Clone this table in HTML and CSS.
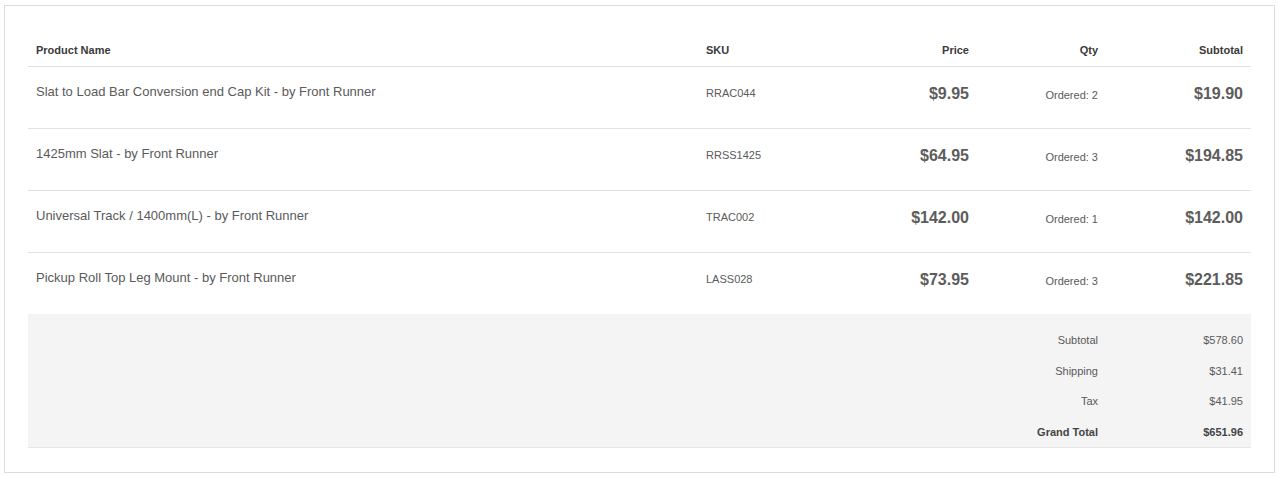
FILE: index.html
```html
<!DOCTYPE html>
<html lang="en">
<head>
<meta charset="utf-8">
<title>Order Items</title>
<link rel="stylesheet" href="styles.css">
</head>
<body>
<div class="order-box">
  <table class="items">
    <colgroup>
      <col class="c-name"><col class="c-sku"><col class="c-price"><col class="c-qty"><col class="c-sub">
    </colgroup>
    <thead>
      <tr>
        <th class="name">Product Name</th>
        <th class="sku">SKU</th>
        <th class="num">Price</th>
        <th class="num">Qty</th>
        <th class="num">Subtotal</th>
      </tr>
    </thead>
    <tbody>
      <tr>
        <td class="name">Slat to Load Bar Conversion end Cap Kit - by Front Runner</td>
        <td class="sku">RRAC044</td>
        <td class="price">$9.95</td>
        <td class="qty">Ordered: 2</td>
        <td class="price">$19.90</td>
      </tr>
      <tr>
        <td class="name">1425mm Slat - by Front Runner</td>
        <td class="sku">RRSS1425</td>
        <td class="price">$64.95</td>
        <td class="qty">Ordered: 3</td>
        <td class="price">$194.85</td>
      </tr>
      <tr>
        <td class="name">Universal Track / 1400mm(L) - by Front Runner</td>
        <td class="sku">TRAC002</td>
        <td class="price">$142.00</td>
        <td class="qty">Ordered: 1</td>
        <td class="price">$142.00</td>
      </tr>
      <tr>
        <td class="name">Pickup Roll Top Leg Mount - by Front Runner</td>
        <td class="sku">LASS028</td>
        <td class="price">$73.95</td>
        <td class="qty">Ordered: 3</td>
        <td class="price">$221.85</td>
      </tr>
    </tbody>
    <tfoot>
      <tr class="first">
        <th colspan="4" class="label">Subtotal</th>
        <td class="amount">$578.60</td>
      </tr>
      <tr>
        <th colspan="4" class="label">Shipping</th>
        <td class="amount">$31.41</td>
      </tr>
      <tr>
        <th colspan="4" class="label">Tax</th>
        <td class="amount">$41.95</td>
      </tr>
      <tr class="grand">
        <th colspan="4" class="label">Grand Total</th>
        <td class="amount">$651.96</td>
      </tr>
    </tfoot>
  </table>
</div>
</body>
</html>
```

FILE: styles.css
```css
html, body {
  margin: 0;
  padding: 0;
  background: #fff;
}

body {
  padding: 5px 4px 0 4px;
  font-family: "Liberation Sans", Arial, sans-serif;
  color: #555;
}

.order-box {
  border: 1px solid #dcdcdc;
  padding: 23px 23px 24px 23px;
}

.items {
  width: 100%;
  border-collapse: collapse;
  table-layout: fixed;
}

.c-name { width: 670px; }
.c-sku { width: 150px; }
.c-price { width: 129px; }
.c-qty { width: 129px; }
.c-sub { width: 145px; }

.items th,
.items td {
  padding: 0 8px;
  vertical-align: top;
}

.items thead th {
  font-size: 11px;
  line-height: 16px;
  font-weight: bold;
  color: #3a3a3a;
  padding-top: 13px;
  padding-bottom: 8px;
  border-bottom: 1px solid #e1e1e1;
  text-align: left;
}

.items thead th.num {
  text-align: right;
}

.items tbody tr {
  border-bottom: 1px solid #e1e1e1;
}

.items tbody tr:last-child {
  border-bottom: none;
}

.items tbody td.name {
  font-size: 13px;
  line-height: 18px;
  padding-top: 16px;
  padding-bottom: 27px;
  color: #5a5a5a;
}

.items tbody td.sku {
  font-size: 11px;
  line-height: 16px;
  padding-top: 18px;
  color: #5a5a5a;
}

.items tbody td.price {
  font-size: 16px;
  line-height: 20px;
  font-weight: bold;
  padding-top: 17px;
  text-align: right;
  color: #5c5c5c;
}

.items tbody td.qty {
  font-size: 11px;
  line-height: 16px;
  padding-top: 20px;
  text-align: right;
  color: #5a5a5a;
}

.items tfoot tr {
  background: #f4f4f4;
}

.items tfoot tr:last-child {
  border-bottom: 1px solid #e6e6e6;
}

.items tfoot th,
.items tfoot td {
  font-size: 11px;
  line-height: 16px;
  font-weight: normal;
  text-align: right;
  padding-top: 7px;
  padding-bottom: 7.5px;
  color: #5a5a5a;
}

.items tfoot tr.first th,
.items tfoot tr.first td {
  padding-top: 18px;
}

.items tfoot tr.grand th,
.items tfoot tr.grand td {
  font-weight: bold;
  color: #444;
}
```
